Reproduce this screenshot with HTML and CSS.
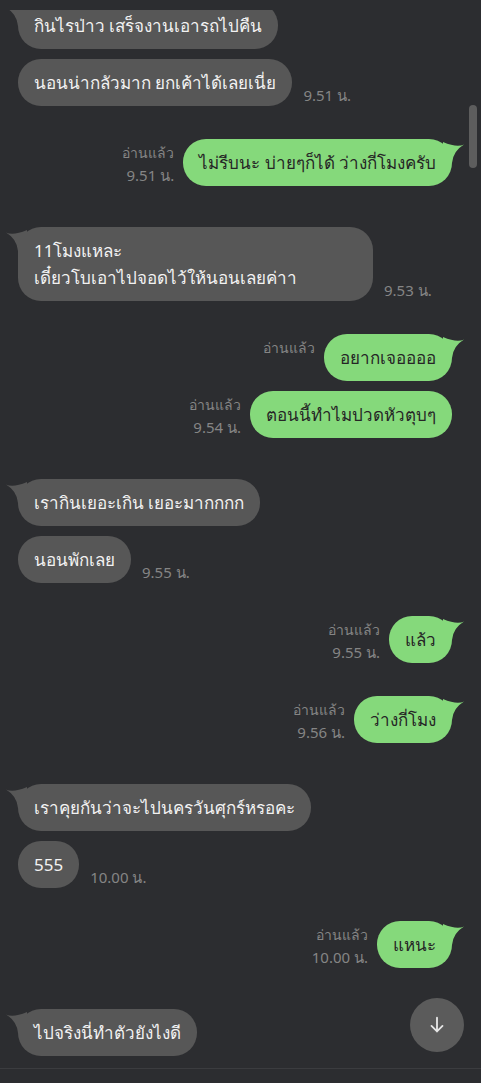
FILE: index.html
```html
<!DOCTYPE html>
<html lang="th">
<head>
  <meta charset="UTF-8">
  <title>LINE chat</title>
  <meta name="viewport" content="width=device-width, initial-scale=1.0">
  <link rel="stylesheet" href="styles.css">
</head>
<body>
  <div class="topbar"></div>

  <main class="chat">
    <div class="row in first">
      <div class="bubble tail">กินไรป่าว เสร็จงานเอารถไปคืน</div>
    </div>
    <div class="row in">
      <div class="bubble">นอนน่ากลัวมาก ยกเค้าได้เลยเนี่ย</div>
      <div class="time">9.51 น.</div>
    </div>

    <div class="row out new">
      <div class="meta"><span>อ่านแล้ว</span><span class="t">9.51 น.</span></div>
      <div class="bubble tail">ไม่รีบนะ บ่ายๆก็ได้ ว่างกี่โมงครับ</div>
    </div>

    <div class="row in new">
      <div class="bubble tail wide">11โมงแหละ<br>เดี๋ยวโบเอาไปจอดไว้ให้นอนเลยค่าา</div>
      <div class="time">9.53 น.</div>
    </div>

    <div class="row out new">
      <div class="meta"><span>อ่านแล้ว</span><span class="t">&nbsp;</span></div>
      <div class="bubble tail">อยากเจออออ</div>
    </div>
    <div class="row out">
      <div class="meta"><span>อ่านแล้ว</span><span class="t">9.54 น.</span></div>
      <div class="bubble">ตอนนี้ทำไมปวดหัวตุบๆ</div>
    </div>

    <div class="row in new">
      <div class="bubble tail">เรากินเยอะเกิน เยอะมากกกก</div>
    </div>
    <div class="row in">
      <div class="bubble">นอนพักเลย</div>
      <div class="time">9.55 น.</div>
    </div>

    <div class="row out new">
      <div class="meta"><span>อ่านแล้ว</span><span class="t">9.55 น.</span></div>
      <div class="bubble tail">แล้ว</div>
    </div>

    <div class="row out new">
      <div class="meta"><span>อ่านแล้ว</span><span class="t">9.56 น.</span></div>
      <div class="bubble tail">ว่างกี่โมง</div>
    </div>

    <div class="row in new">
      <div class="bubble tail">เราคุยกันว่าจะไปนครวันศุกร์หรอคะ</div>
    </div>
    <div class="row in">
      <div class="bubble">555</div>
      <div class="time">10.00 น.</div>
    </div>

    <div class="row out new">
      <div class="meta"><span>อ่านแล้ว</span><span class="t">10.00 น.</span></div>
      <div class="bubble tail">แหนะ</div>
    </div>

    <div class="row in new">
      <div class="bubble tail">ไปจริงนี่ทำตัวยังไงดี</div>
    </div>

    <div class="scrollbar"></div>
    <button class="to-bottom">
      <svg width="22" height="22" viewBox="0 0 24 24"><path d="M12 4v15M6 13l6 6 6-6" fill="none" stroke="#e6e6e6" stroke-width="2" stroke-linecap="round" stroke-linejoin="round"/></svg>
    </button>
  </main>

  <footer class="inputbar"></footer>
</body>
</html>
```

FILE: styles.css
```css
:root {
  --bg: #2c2d30;
  --gray: #575757;
  --green: #85d97b;
  --meta: #858585;
}

* { box-sizing: border-box; margin: 0; padding: 0; }

body {
  width: 481px;
  height: 1083px;
  overflow: hidden;
  background: var(--bg);
  font-family: "Noto Sans", "Liberation Sans", sans-serif;
  display: flex;
  flex-direction: column;
}

.topbar { height: 10px; background: var(--bg); position: relative; z-index: 2; }

.chat {
  position: relative;
  height: 1058px;
  padding: 0 29px 0 18px;
}

.row { display: flex; align-items: flex-end; margin-top: 10px; }
.row.first { margin-top: -8px; }
.row.new { margin-top: 33px; }
.row.in.new { margin-top: 41px; }
.row.out { justify-content: flex-end; }

.bubble {
  position: relative;
  padding: 10px 16px;
  border-radius: 23px;
  font-size: 17px;
  line-height: 27px;
  white-space: nowrap;
}
.bubble.wide { min-width: 355px; }
.in .bubble { background: var(--gray); color: #f2f2f2; }
.out .bubble { background: var(--green); color: #262626; }

.bubble.tail::before {
  content: "";
  position: absolute;
  top: 0;
  width: 24px;
  height: 24px;
  background: inherit;
  clip-path: path("M1 5.5 Q 8 9 22 3 L 22 24 L 13 24 Q 12 12 1 5.5 Z");
}
.in .bubble.tail::before { left: -13px; }
.out .bubble.tail::before { right: -13px; transform: scaleX(-1); }

.time {
  margin: 0 0 2px 11px;
  font-size: 15px;
  line-height: 18px;
  color: var(--meta);
}

.meta {
  display: flex;
  flex-direction: column;
  align-items: flex-end;
  margin-right: 9px;
  font-size: 14px;
  line-height: 22px;
  color: var(--meta);
}
.meta .t { font-size: 15px; }

.scrollbar {
  position: absolute;
  top: 95px;
  right: 4px;
  width: 8px;
  height: 63px;
  border-radius: 4px;
  background: #5d5d5d;
}

.to-bottom {
  position: absolute;
  right: 17px;
  bottom: 16px;
  width: 54px;
  height: 54px;
  border: none;
  border-radius: 50%;
  background: #5b5b5b;
  display: flex;
  align-items: center;
  justify-content: center;
}

.inputbar {
  flex: 1;
  border-top: 1px solid #3b3c3f;
  background: var(--bg);
}
```
